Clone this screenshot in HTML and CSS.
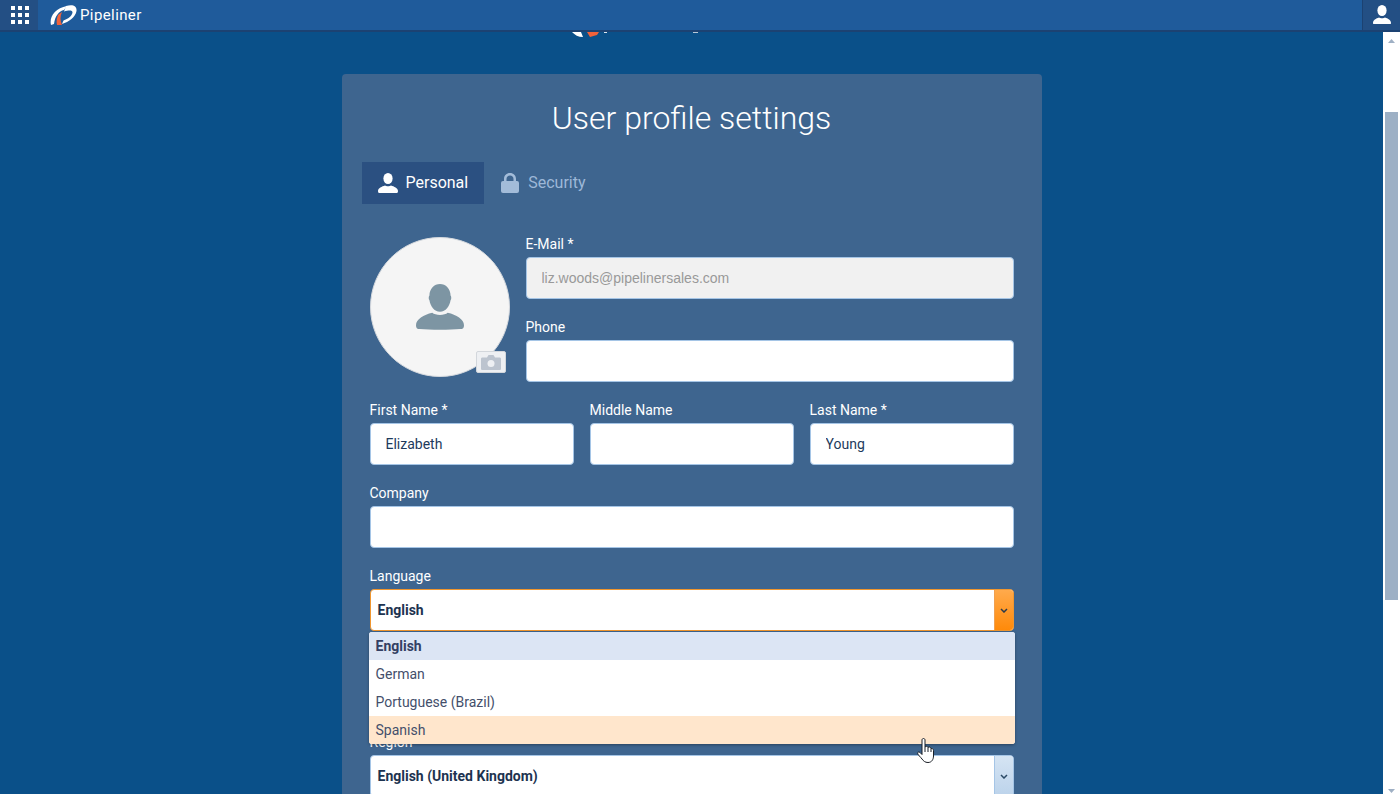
FILE: index.html
```html
<!DOCTYPE html>
<html lang="en">
<head>
  <meta charset="UTF-8">
  <title>User profile settings</title>
  <link rel="stylesheet" href="styles.css">
</head>
<body>
  <header class="topbar">
    <div class="apps-btn">
      <svg width="18" height="18" viewBox="0 0 18 18" fill="#fff">
        <rect x="0" y="0" width="4" height="4"/><rect x="7" y="0" width="4" height="4"/><rect x="14" y="0" width="4" height="4"/>
        <rect x="0" y="7" width="4" height="4"/><rect x="7" y="7" width="4" height="4"/><rect x="14" y="7" width="4" height="4"/>
        <rect x="0" y="14" width="4" height="4"/><rect x="7" y="14" width="4" height="4"/><rect x="14" y="14" width="4" height="4"/>
      </svg>
    </div>
    <div class="brand">
      <svg class="brand-mark" width="27" height="21" viewBox="0 0 27 21">
        <path d="M1 20C-1 12 5 3 17 1L14 5C9 6 5 11 4 19Z" fill="#fff"/>
        <path d="M16 1C23 -1 27 1 26.500 6C25.500 12 19 17 12 19L13.500 15.500C18 14 22 11 22.500 7.500C22.500 5 19 5 14 6.500Z" fill="#fff"/>
        <path d="M8 10L12 7C10 11 10 16 12 20H7C6 16 7 13 8 10Z" fill="#f0623a"/>
      </svg>
      <span class="brand-name">Pipeliner</span>
    </div>
    <div class="user-btn">
      <svg width="20" height="20" viewBox="0 0 20 20" fill="#fff">
        <ellipse cx="10" cy="5.5" rx="4.6" ry="5.5"/>
        <path d="M1 18C1 15 4 13.500 7 12.500C8 13.500 12 13.500 13 12.500C16 13.500 19 15 19 18C19 19 18.500 19 18 19H2C1.500 19 1 19 1 18Z"/>
      </svg>
    </div>
  </header>

  <div class="viewport">
    <main class="content">
      <svg class="page-logo" width="140" height="5" viewBox="0 0 140 5">
        <path d="M0 0H9L11 5C6 5 3 3 0 0Z" fill="#fff"/>
        <path d="M15 0H27L25 3L18 5Z" fill="#f0623a"/>
        <rect x="32" y="0" width="3" height="1" fill="#dfe7ef"/>
        <rect x="121" y="0" width="5" height="1" fill="#b8c8d8"/>
      </svg>

      <section class="card">
        <h1 class="card-title">User profile settings</h1>

        <div class="tabs">
          <div class="tab tab-active">
            <svg width="20" height="20" viewBox="0 0 20 20" fill="#fff">
              <ellipse cx="10" cy="5.500" rx="4.600" ry="5.500"/>
              <path d="M0 18C0 15 4 13.500 7 12.500C8 13.500 12 13.500 13 12.500C16 13.500 20 15 20 18C20 19 19.500 20 19 20H1C.5 20 0 19 0 18Z"/>
            </svg>
            <span>Personal</span>
          </div>
          <div class="tab tab-security">
            <svg width="18" height="20" viewBox="0 0 18 20" fill="#a3bcd9">
              <path d="M3 9V6C3 2.500 5.500 0 9 0C12.500 0 15 2.500 15 6V9H12.500V6C12.500 4 11 2.500 9 2.500C7 2.500 5.500 4 5.500 6V9Z"/>
              <rect x="0" y="8" width="18" height="12" rx="2"/>
            </svg>
            <span>Security</span>
          </div>
        </div>

        <form class="form">
          <div class="top-row">
            <div class="avatar">
              <svg width="48" height="48" viewBox="0 0 50 48" fill="#7d95a3">
                <path d="M25 0C31 0 36 5 36 12C37 13 37 16 36 17C35 23 31 29 25 29C19 29 15 23 14 17C13 16 13 13 14 12C14 5 19 0 25 0Z"/>
                <path d="M0 43C0 37 8 32 17 30C20 33 30 33 33 30C42 32 50 37 50 43C50 46 49 47 46 47C36 48 14 48 4 47C1 47 0 46 0 43Z"/>
              </svg>
              <div class="photo-btn">
                <svg width="20" height="15" viewBox="0 0 20 15">
                  <path d="M1.500 2.500H6L7.500 0H12.500L14 2.500H18.500C19.500 2.500 20 3 20 4V13.500C20 14.500 19.500 15 18.500 15H1.500C.5 15 0 14.500 0 13.500V4C0 3 .5 2.500 1.500 2.500Z" fill="#bcc4cf"/>
                  <circle cx="10" cy="8.500" r="3.500" fill="#eef0f3"/>
                </svg>
              </div>
            </div>
            <div class="top-fields">
              <div class="field">
                <label class="field-label">E-Mail *</label>
                <input class="text-input input-locked" type="text" value="liz.woods@pipelinersales.com" disabled>
              </div>
              <div class="field">
                <label class="field-label">Phone</label>
                <input class="text-input" type="text">
              </div>
            </div>
          </div>

          <div class="name-row">
            <div class="field">
              <label class="field-label">First Name *</label>
              <input class="text-input" type="text" value="Elizabeth">
            </div>
            <div class="field">
              <label class="field-label">Middle Name</label>
              <input class="text-input" type="text">
            </div>
            <div class="field">
              <label class="field-label">Last Name *</label>
              <input class="text-input" type="text" value="Young">
            </div>
          </div>

          <div class="field">
            <label class="field-label">Company</label>
            <input class="text-input" type="text">
          </div>

          <div class="field field-language">
            <label class="field-label">Language</label>
            <div class="select select-open">
              <span class="select-value">English</span>
              <span class="select-arrow">
                <svg width="8" height="5" viewBox="0 0 8 5"><path d="M1 1L4 4L7 1" fill="none" stroke="#2b3a4a" stroke-width="1.500"/></svg>
              </span>
            </div>
            <ul class="dropdown">
              <li class="dropdown-item item-selected">English</li>
              <li class="dropdown-item">German</li>
              <li class="dropdown-item">Portuguese (Brazil)</li>
              <li class="dropdown-item item-hover">Spanish</li>
            </ul>
          </div>

          <!-- covered by the open dropdown -->
          <div class="field field-covered"></div>

          <div class="field">
            <label class="field-label">Region</label>
            <div class="select">
              <span class="select-value">English (United Kingdom)</span>
              <span class="select-arrow">
                <svg width="8" height="5" viewBox="0 0 8 5"><path d="M1 1L4 4L7 1" fill="none" stroke="#2b4a66" stroke-width="1.500"/></svg>
              </span>
            </div>
          </div>
        </form>
      </section>
    </main>

    <div class="scrollbar">
      <svg class="scroll-arrow" width="7" height="4" viewBox="0 0 7 4"><path d="M3.500 0L7 4H0Z" fill="#9fb0c4"/></svg>
      <div class="scroll-thumb"></div>
      <svg class="scroll-arrow scroll-arrow-down" width="7" height="4" viewBox="0 0 7 4"><path d="M0 0H7L3.500 4Z" fill="#9fb0c4"/></svg>
    </div>
  </div>

  <svg class="hand-cursor" width="17" height="25" viewBox="0 0 17 25">
    <path d="M5 2C5 0 8 0 8 2V9C9 8 10.500 8 11 9.500C12 8.500 13.500 9 14 10.500C15 10 16.500 11 16.500 12.500V18C16.500 21 15 24.500 11 24.500C8 24.500 6.500 23 5 21C3.500 19 1 17 .7 15.500C.5 14 2 13.500 3 14.500L5 16.500Z" fill="#fff" stroke="#1a1f26" stroke-width="1"/>
    <path d="M8 9V14M11 9.500V14M14 10.500V14" stroke="#1a1f26" stroke-width="1" fill="none"/>
  </svg>
</body>
</html>
```
FILE: styles.css
```css
* {
  box-sizing: border-box;
}
html, body {
  height: 100%;
}
body {
  margin: 0;
  display: flex;
  flex-direction: column;
  overflow: hidden;
  position: relative;
  font-family: Roboto, "Liberation Sans", sans-serif;
  background-color: #0a5089;
}
.topbar {
  flex: none;
  display: flex;
  align-items: center;
  height: 32px;
  background-color: #1f5b9b;
  border-bottom: 2px solid #1c4272;
}
.apps-btn {
  display: flex;
  align-items: center;
  justify-content: center;
  width: 38px;
  height: 30px;
  padding-left: 2px;
  background-color: #234f84;
}
.brand {
  display: flex;
  align-items: center;
  gap: 3px;
  margin-left: 12px;
}
.brand-name {
  font-size: 15px;
  font-weight: 400;
  letter-spacing: .4px;
  color: #fff;
}
.user-btn {
  display: flex;
  align-items: center;
  justify-content: center;
  width: 38px;
  height: 30px;
  margin-left: auto;
  background-color: #234f84;
  border-left: 1px solid #1c4272;
}
.viewport {
  flex: 1;
  display: flex;
  min-height: 0;
}
.content {
  flex: 1;
  min-width: 0;
  overflow: hidden;
}
.page-logo {
  display: block;
  margin: 0 auto 37px;
  transform: translateX(-50px);
}
.card {
  width: 700px;
  margin: 0 auto;
  padding: 25px 28px 40px;
  background-color: #3e658f;
  border-radius: 4px 4px 0 0;
}
.card-title {
  margin: 0 0 25px;
  font-size: 32px;
  line-height: 38px;
  font-weight: 300;
  text-align: center;
  color: #fff;
}
.tabs {
  display: flex;
  margin: 0 0 32px -8px;
}
.tab {
  display: flex;
  align-items: center;
  gap: 8px;
  height: 42px;
  padding: 0 16px 1px;
  font-size: 16px;
  color: #9db8d8;
}
.tab-security {
  gap: 9px;
  padding-left: 17px;
}
.tab-active {
  background-color: #2b5081;
  color: #fff;
}
.top-row {
  display: flex;
  gap: 16px;
}
.avatar {
  position: relative;
  flex: none;
  display: flex;
  align-items: center;
  justify-content: center;
  width: 140px;
  height: 140px;
  margin-top: 1px;
  background-color: #f5f5f5;
  border: 1px solid #d5d9de;
  border-radius: 50%;
}
.photo-btn {
  position: absolute;
  right: 3px;
  bottom: 3px;
  display: flex;
  align-items: center;
  justify-content: center;
  width: 30px;
  height: 22px;
  background-color: #eef0f3;
  border: 1px solid #d3d7dc;
  border-radius: 2px;
}
.top-fields {
  flex: 1;
}
.name-row {
  display: grid;
  grid-template-columns: repeat(3, 1fr);
  gap: 16px;
}
.field {
  margin-bottom: 20px;
}
.field-language {
  position: relative;
}
.field-covered {
  height: 63px;
}
.field-label {
  display: block;
  margin-bottom: 4px;
  font-size: 14px;
  line-height: 17px;
  font-weight: 400;
  color: #fff;
}
.text-input {
  display: block;
  width: 100%;
  height: 42px;
  padding: 0 15px;
  font-family: Roboto, sans-serif;
  font-size: 14px;
  color: #1d3a5c;
  background-color: #fff;
  border: 1px solid #a5c5e6;
  border-radius: 4px;
  outline: none;
}
.input-locked {
  font-family: "Liberation Sans", Arial, sans-serif;
  color: #999;
  background-color: #f1f1f1;
}
.select {
  display: flex;
  height: 42px;
  background-color: #fff;
  border: 1px solid #a5c5e6;
  border-radius: 4px;
  overflow: hidden;
}
.select-open {
  border-color: #f0962f;
}
.select-value {
  flex: 1;
  padding-left: 7px;
  font-size: 14px;
  line-height: 40px;
  font-weight: 700;
  color: #1d3350;
}
.select-arrow {
  display: flex;
  align-items: center;
  justify-content: center;
  width: 19px;
  background: linear-gradient(#d5e4f3, #bcd3eb);
  border-left: 1px solid #a5c5e6;
}
.select-open .select-arrow {
  background: linear-gradient(#ffaa4c, #ff8a0a);
  border-left-color: #f0a050;
}
.dropdown {
  position: absolute;
  top: 64px;
  left: -1px;
  right: -1px;
  margin: 0;
  padding: 0;
  list-style: none;
  background-color: #fff;
  border-radius: 3px;
  box-shadow: 0 1px 3px rgba(0, 0, 0, .35);
  overflow: hidden;
  z-index: 2;
}
.dropdown-item {
  height: 28px;
  padding-left: 7px;
  font-size: 14px;
  line-height: 28px;
  color: #444f6b;
}
.item-selected {
  font-weight: 700;
  color: #333f63;
  background-color: #dce5f4;
}
.item-hover {
  background-color: #ffe6cc;
}
.scrollbar {
  position: relative;
  flex: none;
  width: 17px;
  background-color: #fff;
}
.scroll-arrow {
  position: absolute;
  top: 7px;
  left: 5px;
}
.scroll-arrow-down {
  top: auto;
  bottom: 1px;
}
.scroll-thumb {
  width: 13px;
  height: 488px;
  margin: 80px 0 0 2px;
  background-color: #9db0c5;
}
.hand-cursor {
  position: absolute;
  top: 738px;
  left: 917px;
  z-index: 5;
}
```
